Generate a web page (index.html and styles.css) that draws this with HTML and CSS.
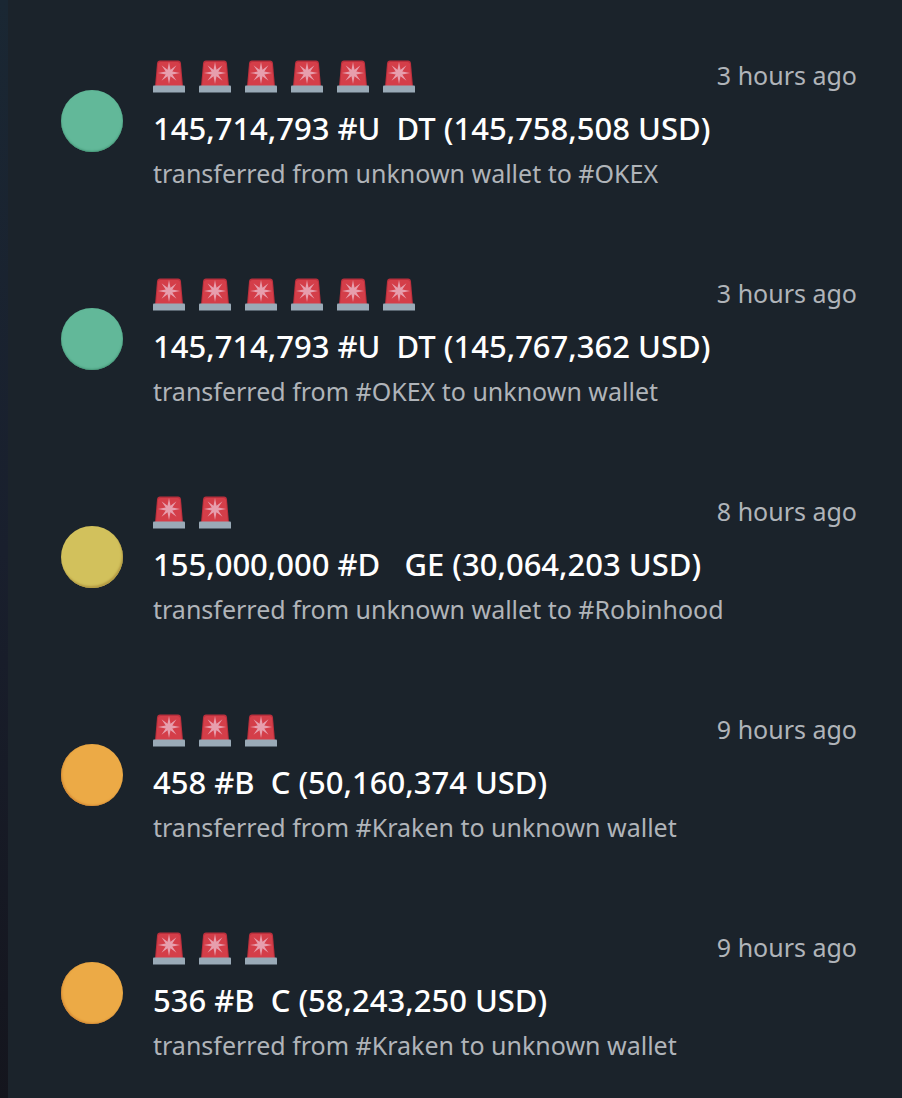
FILE: index.html
```html
<!DOCTYPE html>
<html lang="en">
<head>
	<meta charset="utf-8">
	<meta name="viewport" content="width=device-width, initial-scale=1">
	<title>Whale alerts</title>
	<link rel="stylesheet" href="styles.css">
</head>
<body>
	<svg class="defs" width="0" height="0" aria-hidden="true">
		<symbol id="siren" viewBox="0 0 32 32">
			<path fill="#b92f3c" d="M2 26L4 3Q4.300 0 7 0H25Q27.700 0 28 3L30 26Z"/>
			<path fill="#d43e49" d="M3 26L5 3.500Q5.300 1.500 7.500 1.500H24.500Q26.700 1.500 27 3.500L29 26Z"/>
			<path fill="#e79ead" d="M16 1.500L17.500 9.200L23.500 4.800L19.300 11.100L27 12.500L19.300 13.900L23.500 20.200L17.500 15.800L16 23.500L14.500 15.800L8.500 20.200L12.700 13.900L5 12.500L12.700 11.100L8.500 4.800L14.500 9.200Z"/>
			<path fill="#9aaab7" d="M1 25H31Q32 25 32 26V32H0V26Q0 25 1 25Z"/>
		</symbol>
	</svg>
	<ul id="alerts"></ul>
	<script type="text/javascript">
	var data=[
		{color:'green',sirens:6,time:'3 hours ago',title:'145,714,793 #U  DT (145,758,508 USD)',text:'transferred from unknown wallet to #OKEX'},
		{color:'green',sirens:6,time:'3 hours ago',title:'145,714,793 #U  DT (145,767,362 USD)',text:'transferred from #OKEX to unknown wallet'},
		{color:'yellow',sirens:2,time:'8 hours ago',title:'155,000,000 #D   GE (30,064,203 USD)',text:'transferred from unknown wallet to #Robinhood'},
		{color:'orange',sirens:3,time:'9 hours ago',title:'458 #B  C (50,160,374 USD)',text:'transferred from #Kraken to unknown wallet'},
		{color:'orange',sirens:3,time:'9 hours ago',title:'536 #B  C (58,243,250 USD)',text:'transferred from #Kraken to unknown wallet'}
	];
	var siren='<svg class="siren" aria-hidden="true"><use href="#siren"/></svg>';
	var html='';
	for (var i = 0; i < data.length; i++) {
		var a=data[i];
		html+='<li class="alert">'
			+'<span class="dot '+a.color+'"></span>'
			+'<div class="content">'
			+'<div class="top"><div class="sirens">'+siren.repeat(a.sirens)+'</div><span class="time">'+a.time+'</span></div>'
			+'<h2>'+a.title+'</h2>'
			+'<p>'+a.text+'</p>'
			+'</div></li>';
	}
	document.getElementById('alerts').innerHTML=html;
	</script>
</body>
</html>
```
FILE: styles.css
```css
*{
	margin:0;
	padding: 0;
	box-sizing: border-box;
}
body{
	padding-left: 8px;
	background: linear-gradient(#1a2733,#191f2d 50%,#14151d);
	color: #fff;
	font-family: "Noto Sans", sans-serif;
}
.defs{
	position: absolute;
}
#alerts{
	display: flex;
	flex-direction: column;
	gap: 82px;
	min-height: 100vh;
	padding: 60px 45px 36px 53px;
	background: #1b232b;
	list-style: none;
}
.alert{
	display: flex;
	gap: 30px;
}
.dot{
	flex: none;
	width: 62px;
	height: 62px;
	margin-top: 30px;
	border-radius: 50%;
}
.dot.green{
	background: #62b899;
	box-shadow: inset 0 -1px 2px #459777;
}
.dot.yellow{
	background: #d2c15c;
	box-shadow: inset -1px -2px 2px #b39a43;
}
.dot.orange{
	background: #ecaa46;
	box-shadow: inset 1px -1px 2px #d58a35;
}
.content{
	flex: 1;
}
.top{
	display: flex;
	justify-content: space-between;
	height: 46px;
}
.sirens{
	display: flex;
	gap: 14px;
}
.siren{
	width: 32px;
	height: 33px;
}
.time{
	color: #b0b4b9;
	font-size: 25px;
	line-height: 30px;
}
h2{
	font-size: 31px;
	font-weight: 500;
	line-height: 45px;
	white-space: pre-wrap;
}
p{
	color: #b0b4b9;
	font-size: 25px;
	line-height: 45px;
}
```
